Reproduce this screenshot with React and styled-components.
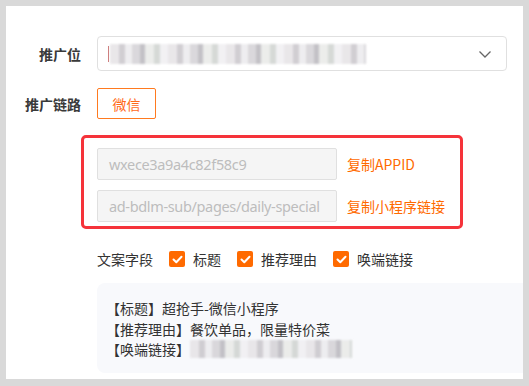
import React from 'react';
import styled, { createGlobalStyle } from 'styled-components';

const Global = createGlobalStyle`
  html, body { margin: 0; background: #d9d9d9; }
  body {
    font-family: "Noto Sans CJK SC", "Noto Sans", sans-serif;
    font-size: 14px;
    color: #333;
  }
  #root { padding: 6px 6px 7px 6px; }
`;

const Panel = styled.div`
  background: #fff;
  width: 517px;
  height: 373px;
  box-sizing: border-box;
  padding-top: 30px;
  overflow: hidden;
`;

const Row = styled.div`
  display: flex;
  align-items: center;
  margin-bottom: ${p => p.gap || 0}px;
`;

const Label = styled.div`
  width: 75px;
  margin-right: 16px;
  text-align: right;
  font-weight: 700;
  color: #3a3a3a;
  line-height: 20px;
`;

const Select = styled.div`
  width: 410px;
  height: 35px;
  box-sizing: border-box;
  border: 1px solid #e0e0e0;
  border-radius: 4px;
  display: flex;
  align-items: center;
  padding: 0 14px 0 10px;
`;

const Caret = styled.span`
  width: 1px;
  height: 16px;
  background: #c77;
  margin-right: 1px;
`;

const Mosaic = styled.span`
  display: inline-block;
  width: ${p => p.w}px;
  height: ${p => p.h || 20}px;
  background:
    repeating-linear-gradient(90deg,
      #e6e3e6 0 9px, #c9c6cb 9px 15px, #ecebee 15px 22px, #d4d2d6 22px 30px,
      #b9b7bd 30px 35px, #e9eae8 35px 44px, #cfd3d0 44px 50px, #f0eff2 50px 58px);
  filter: blur(1.2px);
  opacity: 0.85;
`;

const Chevron = styled.svg`
  margin-left: auto;
  width: 14px;
  height: 14px;
`;

const Tag = styled.button`
  width: 59px;
  height: 31px;
  border: 1px solid #ff7a1f;
  border-radius: 2px;
  background: #fff;
  color: #ff6a1a;
  font-family: inherit;
  font-size: 14px;
  padding: 0;
`;

const Highlight = styled.div`
  margin-left: 75px;
  width: 382px;
  box-sizing: border-box;
  border: 3px solid #f5333a;
  border-radius: 5px;
  padding: 10px 0 4px 13px;
  display: flex;
  flex-direction: column;
  gap: 10px;
  margin-bottom: 20px;
`;

const CopyRow = styled.div`
  display: flex;
  align-items: center;
  gap: 10px;
`;

const Field = styled.div`
  width: 240px;
  height: 32px;
  box-sizing: border-box;
  background: #f5f5f5;
  border: 1px solid #e0e0e0;
  border-radius: 2px;
  padding: 0 11px;
  display: flex;
  align-items: center;
  color: #bdbdbd;
  font-family: "Noto Sans", sans-serif;
  font-size: 14.5px;
  letter-spacing: -0.35px;
  white-space: nowrap;
  overflow: hidden;
`;

const CopyLink = styled.a`
  color: #ff6a00;
  font-size: 14px;
`;

const Options = styled.div`
  margin-left: 91px;
  display: flex;
  align-items: center;
  height: 20px;
  margin-bottom: 14px;
`;

const OptLabel = styled.span`
  margin-right: 16px;
  color: #333;
`;

const Check = styled.label`
  display: flex;
  align-items: center;
  margin-right: 16px;
  color: #333;
`;

const Box = styled.span`
  width: 16px;
  height: 16px;
  border-radius: 2px;
  background: #ff6a00;
  margin-right: 8px;
  display: flex;
  align-items: center;
  justify-content: center;
`;

const Preview = styled.div`
  margin-left: 91px;
  height: 90px;
  box-sizing: border-box;
  background: #f8f9fc;
  border-radius: 8px 0 0 8px;
  padding: 15px 0 0 9px;
  line-height: 20.5px;
  color: #333;
`;

const Line = styled.div`
  display: flex;
  align-items: center;
  white-space: nowrap;
`;

const Tick = () => (
  <svg width="11" height="9" viewBox="0 0 11 9">
    <path d="M1.5 4.5 L4.3 7.2 L9.5 1.8" stroke="#fff" strokeWidth="2" fill="none" strokeLinecap="round" strokeLinejoin="round" />
  </svg>
);

const options = ['标题', '推荐理由', '唤端链接'];

export default function App() {
  return (
    <>
      <Global />
      <Panel>
        <Row gap={17}>
          <Label>推广位</Label>
          <Select>
            <Caret />
            <Mosaic w={256} />
            <Chevron viewBox="0 0 14 14">
              <path d="M1.5 4.5 L7 10 L12.5 4.5" stroke="#666" strokeWidth="1.3" fill="none" />
            </Chevron>
          </Select>
        </Row>
        <Row gap={16}>
          <Label>推广链路</Label>
          <Tag>微信</Tag>
        </Row>
        <Highlight>
          <CopyRow>
            <Field>wxece3a9a4c82f58c9</Field>
            <CopyLink>复制APPID</CopyLink>
          </CopyRow>
          <CopyRow>
            <Field>ad-bdlm-sub/pages/daily-special</Field>
            <CopyLink>复制小程序链接</CopyLink>
          </CopyRow>
        </Highlight>
        <Options>
          <OptLabel>文案字段</OptLabel>
          {options.map(o => (
            <Check key={o}>
              <Box><Tick /></Box>
              {o}
            </Check>
          ))}
        </Options>
        <Preview>
          <Line>【标题】超抢手-微信小程序</Line>
          <Line>【推荐理由】餐饮单品，限量特价菜</Line>
          <Line>【唤端链接】<Mosaic w={162} h={18} /></Line>
        </Preview>
      </Panel>
    </>
  );
}
